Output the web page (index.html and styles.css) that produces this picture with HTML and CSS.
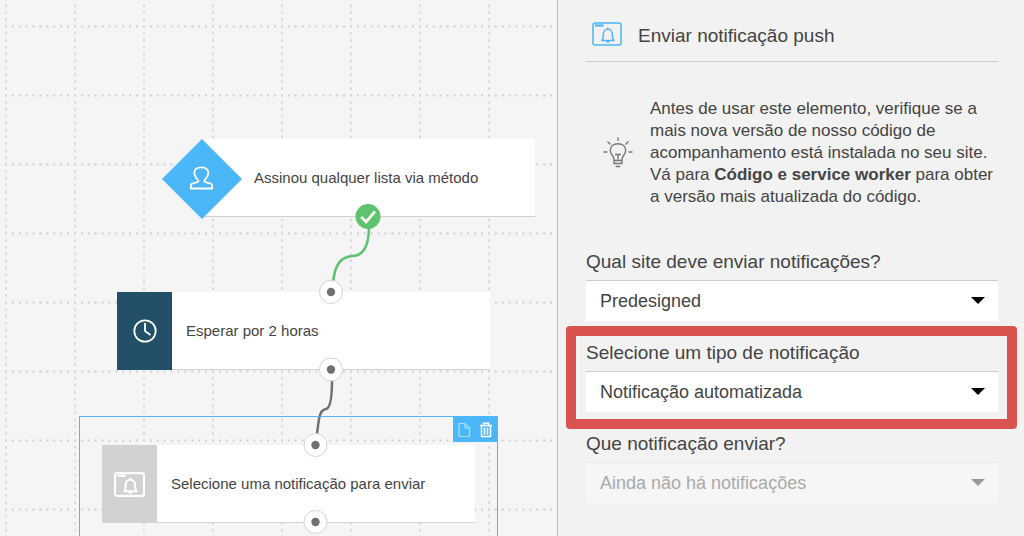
FILE: index.html
```html
<!DOCTYPE html>
<html lang="pt-BR">
<head>
<meta charset="utf-8">
<meta name="viewport" content="width=device-width, initial-scale=1">
<title>Enviar notificação push</title>
<link rel="stylesheet" href="styles.css">
</head>
<body>
<svg class="defs" width="0" height="0" aria-hidden="true">
  <symbol id="push-icon" viewBox="0 0 30 24">
    <rect x="1" y="1" width="28" height="22" rx="2" fill="none" stroke="currentColor"/>
    <path d="M3 3.500H11.500" fill="none" stroke="currentColor" stroke-width="2.200"/>
    <path d="M9.800 18.500C11.500 17 11.300 15.500 11.300 12.500C11.300 9.500 13.200 7.300 15.800 7.300S20.300 9.500 20.300 12.500C20.300 15.500 20.200 17 21.900 18.500Z" fill="none" stroke="currentColor" stroke-linejoin="round"/>
    <path d="M15.800 7V5.600M14 19.800H17.600" fill="none" stroke="currentColor"/>
  </symbol>
</svg>
<div class="app">
  <main class="canvas">
    <svg class="grid" aria-hidden="true">
      <defs>
        <pattern id="dots" x="5" y="25.500" width="69" height="69" patternUnits="userSpaceOnUse">
          <path d="M0 1H69M1 0V69" fill="none" stroke="#cdcdcd" stroke-width="1.800" stroke-dasharray="1.900 5"/>
        </pattern>
      </defs>
      <rect width="100%" height="100%" fill="url(#dots)"/>
    </svg>

    <section class="card card-trigger">
      <p class="card-text">Assinou qualquer lista via método</p>
    </section>
    <svg class="diamond" viewBox="0 0 82 82" aria-hidden="true">
      <path d="M41 1L81 41L41 81L1 41Z" fill="#4bb6f8"/>
      <path d="M29.800 50.500V47C29.800 45 35.500 45 37 43.800C37.800 43.200 37.300 42.300 36.300 41.300C34.300 39.200 33.300 37.300 33.300 35C33.300 31.500 36 29.300 40.300 29.300S47.300 31.500 47.300 35C47.300 37.300 46.300 39.200 44.300 41.300C43.300 42.300 42.900 43.200 43.700 43.800C45.200 45 51.200 45 51.200 47V50.500Z" fill="none" stroke="#fff" stroke-width="1.800" stroke-linejoin="round"/>
    </svg>

    <section class="card card-wait">
      <div class="card-icon navy">
        <svg width="26" height="26" viewBox="0 0 26 26" aria-hidden="true">
          <circle cx="13" cy="13" r="10.700" fill="none" stroke="#fff" stroke-width="1.800"/>
          <path d="M13 5V13L18.500 17" fill="none" stroke="#fff" stroke-width="1.800"/>
        </svg>
      </div>
      <p class="card-text">Esperar por 2 horas</p>
    </section>

    <section class="card card-push">
      <div class="card-icon gray">
        <svg class="icon-bold" width="31" height="25" aria-hidden="true"><use href="#push-icon"/></svg>
      </div>
      <p class="card-text">Selecione uma notificação para enviar</p>
    </section>

    <svg class="links" aria-hidden="true">
      <path d="M369 226C369 247 363 256 352 256C341 257 335 264 333 282" fill="none" stroke="#5bc46c" stroke-width="2.500"/>
      <path d="M332 380C332 392 331 408 326 409C319 410 319 419 317 434" fill="none" stroke="#707070" stroke-width="2.500"/>
      <g fill="#fff" stroke="#d4d4d4">
        <circle cx="331" cy="292" r="11.500"/><circle cx="331" cy="369.500" r="11.500"/>
        <circle cx="315.500" cy="445" r="11.500"/><circle cx="315.500" cy="522" r="11.500"/>
      </g>
      <g fill="#707070">
        <circle cx="331" cy="292" r="4.200"/><circle cx="331" cy="369.500" r="4.200"/>
        <circle cx="315.500" cy="445" r="4.200"/><circle cx="315.500" cy="522" r="4.200"/>
      </g>
      <circle cx="368" cy="216.500" r="12.500" fill="#5bc46c"/>
      <path d="M361.200 217L366.200 222L375 211.300" fill="none" stroke="#fff" stroke-width="2.800"/>
    </svg>

    <div class="selection">
      <div class="tools">
        <button class="tool" type="button" aria-label="Copiar">
          <svg width="14" height="16" viewBox="0 0 14 16" fill="none" stroke="#a9dcfc" stroke-width="1.200" aria-hidden="true"><path d="M2 1.500H8L12.500 6V14.500H2ZM8 1.500V6H12.500"/></svg>
        </button>
        <button class="tool" type="button" aria-label="Excluir">
          <svg width="14" height="16" viewBox="0 0 14 16" fill="none" stroke="#fff" stroke-width="1.500" aria-hidden="true"><path d="M1 3.500H13M4.500 3V1.200H9.500V3M2.500 4V14.500H11.500V4M5.500 5.500V12.500M8.500 5.500V12.500"/></svg>
        </button>
      </div>
    </div>
  </main>

  <aside class="panel">
    <header class="panel-head">
      <svg class="head-icon" width="30" height="24" aria-hidden="true"><use href="#push-icon"/></svg>
      <h1 class="title">Enviar notificação push</h1>
    </header>
    <div class="tip">
      <svg class="bulb" width="30" height="32" viewBox="0 0 30 32" fill="none" stroke="#777" stroke-width="1.400" aria-hidden="true">
        <path d="M11 22.500C11 18.500 7.300 18 7.300 13.500C7.300 9.500 10.500 6.800 15 6.800S22.700 9.500 22.700 13.500C22.700 18 19 18.500 19 22.500V26.500H11ZM11 23.500H19M12.700 29.500H17.300M15 22.500V17.500M12 17.500H18"/>
        <path d="M15 0.500V4M0.500 15H4.500M25.500 15H29.500M4.500 4.500L7.500 7.500M25.500 4.500L22.500 7.500"/>
      </svg>
      <p class="tip-text">Antes de usar este elemento, verifique se a mais nova versão de nosso código de acompanhamento está instalada no seu site. Vá para <strong>Código e service worker</strong> para obter a versão mais atualizada do código.</p>
    </div>
    <form class="fields">
      <div class="field">
        <label class="label" for="site">Qual site deve enviar notificações?</label>
        <div class="select-box"><select class="select" id="site"><option>Predesigned</option></select></div>
      </div>
      <div class="field highlighted">
        <label class="label" for="type">Selecione um tipo de notificação</label>
        <div class="select-box"><select class="select" id="type"><option>Notificação automatizada</option></select></div>
      </div>
      <div class="field">
        <label class="label" for="notification">Que notificação enviar?</label>
        <div class="select-box disabled"><select class="select" id="notification" disabled><option>Ainda não há notificações</option></select></div>
      </div>
    </form>
  </aside>
</div>
</body>
</html>
```

FILE: styles.css
```css
* { box-sizing: border-box; }

body {
  margin: 0;
  font-family: "Liberation Sans", Arial, sans-serif;
  color: #444;
  background: #f2f2f2;
}

h1, p { margin: 0; font-weight: normal; }

.defs { position: absolute; }

.app {
  display: grid;
  grid-template-columns: 557fr 467fr;
  min-height: 100vh;
}

/* Workflow canvas */
.canvas {
  position: relative;
  overflow: hidden;
  background: #f5f5f5;
}

.grid, .links {
  position: absolute;
  inset: 0;
  width: 100%;
  height: 100%;
}

.links { pointer-events: none; }

.card {
  position: absolute;
  display: flex;
  align-items: center;
  height: 78px;
  background: #fff;
  border-bottom: 1px solid #d2d2d2;
}

.card-trigger { left: 202px; top: 139px; width: 333px; padding-left: 52px; }
.card-wait { left: 117px; top: 292px; width: 373px; }
.card-push { left: 102px; top: 445px; width: 373px; }

.card-icon {
  display: flex;
  align-items: center;
  justify-content: center;
  width: 55px;
  height: 78px;
  margin: 0 14px -1px 0;
}

.navy { background: #225068; }
.gray { background: #d2d2d2; color: #fff; }

.icon-bold { stroke-width: 2; }

.card-text { font-size: 15px; line-height: 20px; white-space: nowrap; }

.diamond {
  position: absolute;
  left: 161px;
  top: 138px;
  width: 82px;
  height: 82px;
}

.selection {
  position: absolute;
  left: 79px;
  top: 416px;
  bottom: -40px;
  width: 419px;
  border: 1px solid #4bb6f8;
}

.tools {
  display: flex;
  justify-content: space-around;
  width: 44px;
  height: 25px;
  margin-left: auto;
  background: #4bb6f8;
}

.tool {
  display: flex;
  align-items: center;
  padding: 0;
  border: 0;
  background: none;
}

/* Settings panel */
.panel {
  padding: 0 26px 24px 28px;
  border-left: 1px solid #bdbdbd;
  background: #f2f2f2;
}

.panel-head {
  display: flex;
  align-items: center;
  gap: 16px;
  height: 62px;
  padding: 10px 0 0 6px;
  border-bottom: 1px solid #ccc;
}

.head-icon { color: #4bb6f8; margin-bottom: 4px; stroke-width: 1.5; }

.title { font-size: 19px; line-height: 24px; }

.tip {
  display: flex;
  align-items: center;
  gap: 17px;
  margin-top: 36px;
  padding-left: 17px;
}

.bulb { flex: none; }

.tip-text { font-size: 17px; line-height: 22px; }

.fields {
  display: grid;
  gap: 21px;
  margin-top: 43px;
}

.field { position: relative; }

.label { display: block; font-size: 19px; line-height: 22px; margin-bottom: 7px; }

.select-box { position: relative; }

.select-box::after {
  content: "";
  position: absolute;
  top: 17px;
  right: 13px;
  border: 7px solid transparent;
  border-top-color: #000;
  border-bottom-width: 0;
  pointer-events: none;
}

.select {
  display: block;
  width: 100%;
  height: 41px;
  padding: 0 40px 0 14px;
  border: 0;
  border-top: 1px solid #ccc;
  border-radius: 0;
  background: #fff;
  color: #444;
  font: 18px "Liberation Sans", Arial, sans-serif;
  appearance: none;
}

.select:disabled {
  background: #f6f6f6;
  border-top-color: #ebebeb;
  color: #aaa;
  opacity: 1;
}

.disabled::after { border-top-color: #999; }

.highlighted::after {
  content: "";
  position: absolute;
  inset: -16px -19px -17px -20px;
  border: 10px solid #d9534f;
  border-radius: 4px;
  pointer-events: none;
}
```
